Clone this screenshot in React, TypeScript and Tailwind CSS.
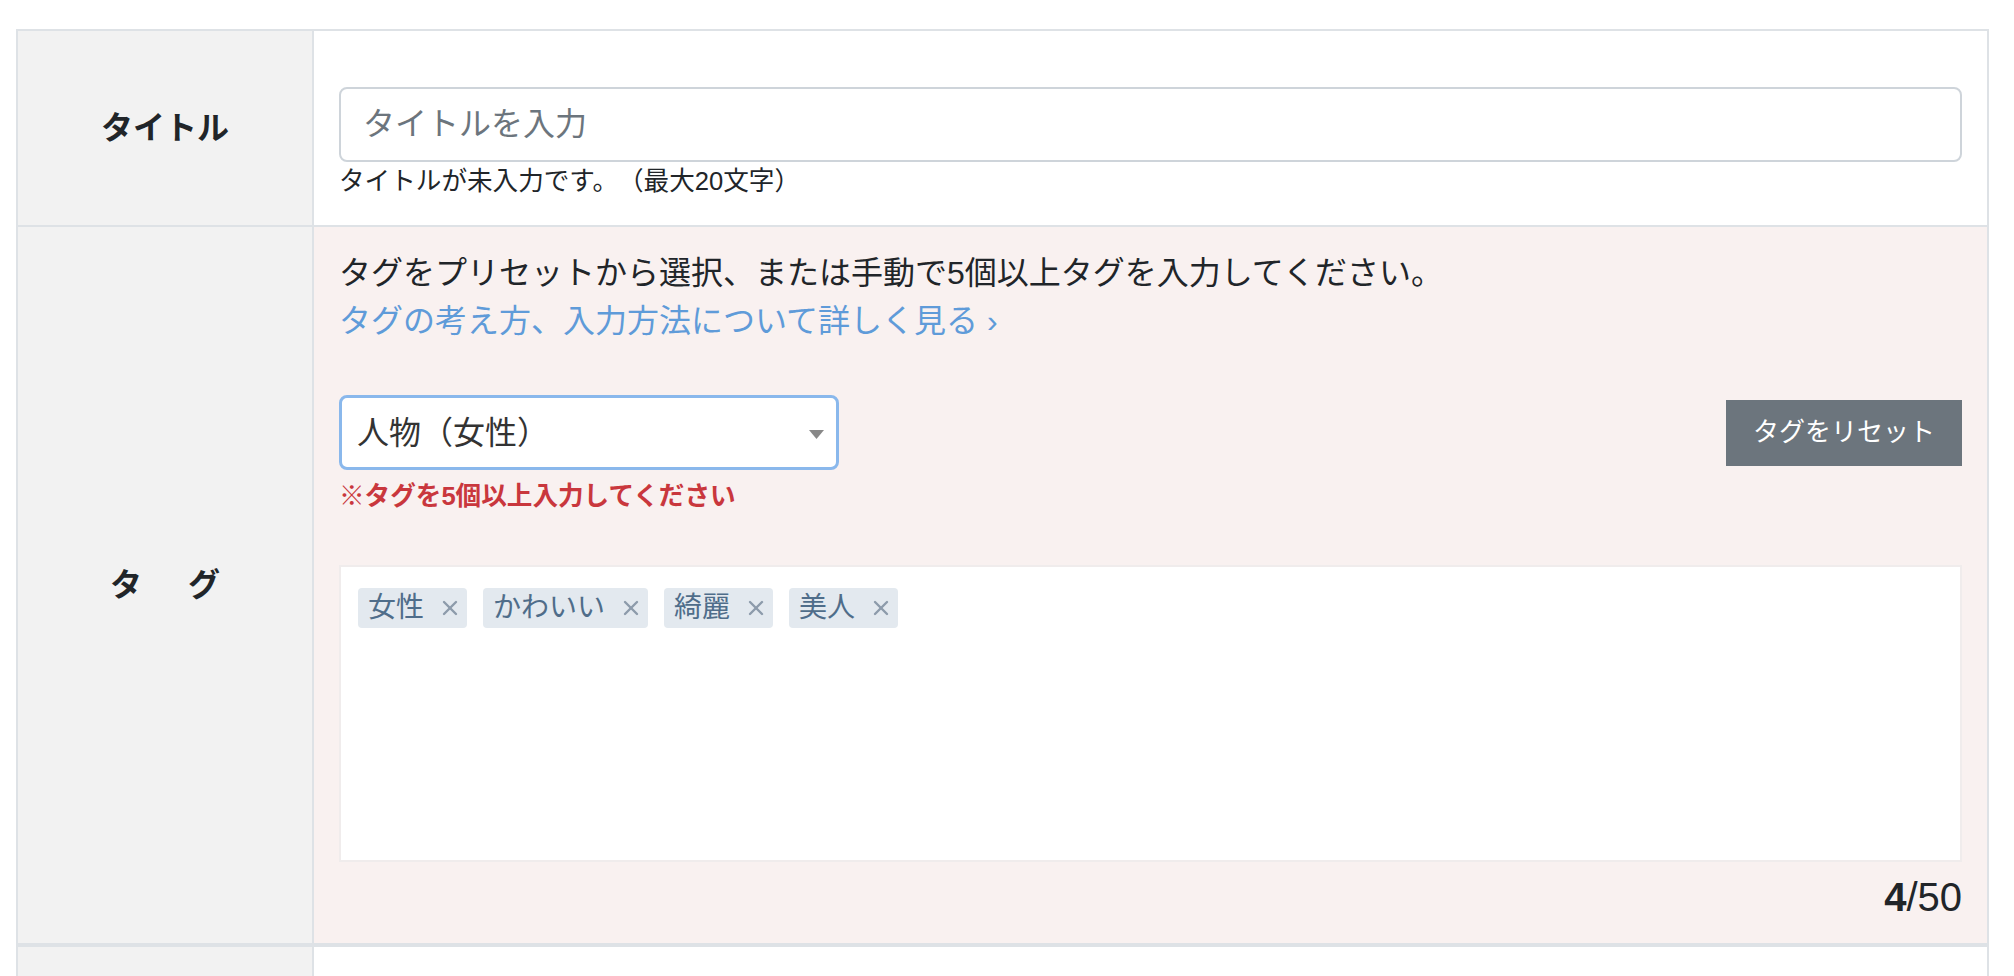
import React from "react";

function XIcon() {
  return (
    <svg width="16" height="16" viewBox="0 0 16 16" className="shrink-0">
      <line x1="2" y1="2" x2="14" y2="14" stroke="#8d9bab" strokeWidth="2.4" strokeLinecap="round" />
      <line x1="14" y1="2" x2="2" y2="14" stroke="#8d9bab" strokeWidth="2.4" strokeLinecap="round" />
    </svg>
  );
}

function Chip({ label }: { label: string }) {
  return (
    <span className="inline-flex h-[40px] items-center gap-[18px] rounded-[4px] bg-[#e3e9ef] pl-[10px] pr-[9px] text-[28px] leading-none text-[#4f6d8a]">
      <span>{label}</span>
      <XIcon />
    </span>
  );
}

export default function App() {
  const tags = ["女性", "かわいい", "綺麗", "美人"];
  return (
    <div className="min-h-screen bg-white pl-[16px] pt-[29px] font-['Liberation_Sans','Noto_Sans_CJK_JP',sans-serif] text-[#212529] [text-spacing-trim:space-all]">
      <div className="w-[1973px] border-x-2 border-t-2 border-[#dee2e6]">
        {/* Row 1: title */}
        <div className="flex border-b-2 border-[#dee2e6]">
          <div className="flex w-[296px] shrink-0 items-center justify-center border-r-2 border-[#dee2e6] bg-[#f2f2f2] text-[32px] font-bold">
            タイトル
          </div>
          <div className="flex-1 bg-white px-[25px] pb-[25px] pt-[56px]">
            <input
              placeholder="タイトルを入力"
              className="block h-[75px] w-full rounded-[8px] border-2 border-[#ced4da] bg-white px-[22px] text-[32px] text-[#495057] outline-none placeholder:text-[#6c757d]"
            />
            <p className="text-[25.6px] leading-[38px]">タイトルが未入力です。（最大20文字）</p>
          </div>
        </div>

        {/* Row 2: tags */}
        <div className="flex border-b-4 border-[#dee2e6]">
          <div className="flex w-[296px] shrink-0 items-center justify-center border-r-2 border-[#dee2e6] bg-[#f2f2f2] text-[32px] font-bold">
            <span className="mr-[-7px] tracking-[7px]">タ　グ</span>
          </div>
          <div className="flex-1 bg-[#f9f1f0] px-[25px] pb-[19px] pt-[22px]">
            <p className="text-[32px] leading-[48px]">
              タグをプリセットから選択、または手動で5個以上タグを入力してください。
            </p>
            <a href="#" className="block text-[32px] leading-[48px] text-[#5f9bd9]">
              タグの考え方、入力方法について詳しく見る ›
            </a>

            <div className="mt-[50px] flex items-center justify-between">
              <div className="relative w-[500px]">
                <select
                  defaultValue="female"
                  className="block h-[75px] w-full appearance-none rounded-[8px] border-[3px] border-[#8ab8ec] bg-white pl-[15px] pr-[48px] text-[32px] text-[#333] outline-none"
                >
                  <option value="female">人物（女性）</option>
                  <option value="male">人物（男性）</option>
                </select>
                <svg
                  width="15"
                  height="9"
                  viewBox="0 0 15 9"
                  className="pointer-events-none absolute right-[15px] top-[35px]"
                >
                  <polygon points="0,0 15,0 7.5,9" fill="#888888" />
                </svg>
              </div>
              <button className="flex h-[66px] w-[236px] items-center justify-center bg-[#6c757d] text-[26px] text-white">
                タグをリセット
              </button>
            </div>
            <p className="mt-[7px] text-[25.6px] font-bold leading-[38px] text-[#c9373d]">
              ※タグを5個以上入力してください
            </p>

            <div className="mt-[50px] h-[297px] border-2 border-[#f0ecec] bg-white pl-[17px] pt-[21px]">
              <div className="flex flex-wrap gap-[16px]">
                {tags.map((t) => (
                  <Chip key={t} label={t} />
                ))}
              </div>
            </div>

            <p className="mt-[8px] text-right text-[40px] leading-[54px]">
              <span className="font-bold">4</span>/50
            </p>
          </div>
        </div>

        {/* Row 3 (partially visible) */}
        <div className="flex h-[200px]">
          <div className="w-[296px] shrink-0 border-r-2 border-[#dee2e6] bg-[#f2f2f2]" />
          <div className="flex-1 bg-white" />
        </div>
      </div>
    </div>
  );
}
